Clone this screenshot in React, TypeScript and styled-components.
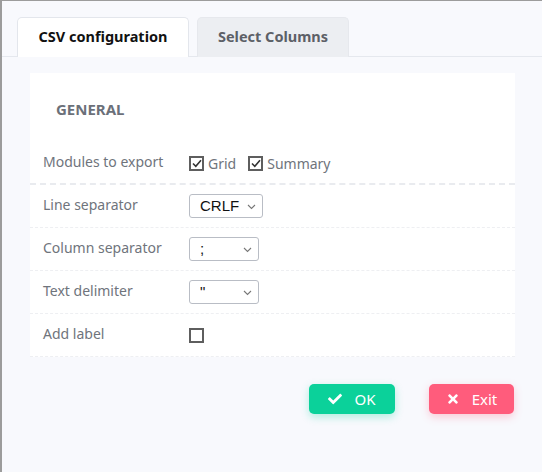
import React from "react";
import styled, { createGlobalStyle } from "styled-components";
import { FaCheck, FaTimes } from "react-icons/fa";

const GlobalStyle = createGlobalStyle`
  html, body {
    margin: 0;
    padding: 0;
    background: #f8f9fd;
    font-family: "Noto Sans", "Open Sans", sans-serif;
  }
  * { box-sizing: border-box; }
`;

const Frame = styled.div`
  height: 472px;
  border-top: 1px solid #9c9c9c;
  border-left: 2px solid #9c9c9c;
  background: #f8f9fd;
`;

const TabBar = styled.div`
  display: flex;
  gap: 8px;
  padding: 16px 0 0 15px;
  border-bottom: 1px solid #e5e8ee;
`;

const Tab = styled.div<{ $active?: boolean }>`
  height: 40px;
  display: flex;
  align-items: center;
  justify-content: center;
  padding-bottom: 4px;
  width: ${(p) => (p.$active ? "172px" : "152px")};
  margin-bottom: -1px;
  border: 1px solid ${(p) => (p.$active ? "#e3e6ec" : "#e6e8ed")};
  border-bottom: none;
  border-radius: 5px 5px 0 0;
  background: ${(p) => (p.$active ? "#ffffff" : "#eceef2")};
  color: ${(p) => (p.$active ? "#111" : "#5c6067")};
  font-weight: 700;
  font-size: 14.5px;
`;

const Panel = styled.div`
  margin: 16px 27px 0 28px;
  background: #fff;
`;

const Heading = styled.div`
  padding: 26px 26px 0;
  height: 66px;
  font-size: 15px;
  font-weight: 700;
  color: #6b7079;
  line-height: 20px;
`;

const Row = styled.div<{ $h: number; $strong?: boolean }>`
  display: grid;
  grid-template-columns: 146px 1fr;
  align-items: center;
  height: ${(p) => p.$h}px;
  padding: ${(p) => (p.$strong ? "4px" : "0")} 13px 0;
  border-bottom: ${(p) => (p.$strong ? "2px dashed #e9ebef" : "1px dashed #eeeff2")};
`;

const Label = styled.div`
  font-size: 14px;
  color: #6f747c;
  padding-bottom: 4px;
`;

const Options = styled.div`
  display: flex;
  align-items: center;
  gap: 12px;
`;

const Option = styled.label`
  display: flex;
  align-items: center;
  gap: 4px;
  font-size: 14px;
  color: #6f747c;
`;

const Box = styled.span`
  width: 15px;
  height: 15px;
  border: 2px solid #5e5e5e;
  background: #fff;
  display: inline-flex;
  align-items: center;
  justify-content: center;
`;

const SelectWrap = styled.div<{ $w: number }>`
  position: relative;
  width: ${(p) => p.$w}px;
  height: 24px;
  border: 1px solid #b9bdc5;
  border-radius: 3px;
  background: #fff;
`;

const SelectText = styled.div`
  padding: 1px 0 0 10px;
  font-family: "Liberation Sans", Arial, sans-serif;
  font-size: 15px;
  line-height: 20px;
  color: #111;
`;

const Chevron = styled.svg`
  position: absolute;
  right: 6px;
  top: 9px;
`;

const Footer = styled.div`
  display: flex;
  justify-content: flex-end;
  gap: 34px;
  margin: 27px 28px 0 0;
`;

const Button = styled.button<{ $color: string; $glow: string; $w: number }>`
  height: 30px;
  width: ${(p) => p.$w}px;
  border: none;
  border-radius: 5px;
  background: ${(p) => p.$color};
  color: #fff;
  font-family: "Noto Sans", sans-serif;
  font-size: 15px;
  display: flex;
  align-items: center;
  justify-content: center;
  gap: 12px;
  box-shadow: 0 3px 8px ${(p) => p.$glow};
`;

const Check = () => (
  <svg width="10" height="9" viewBox="0 0 10 9">
    <path d="M1 4.5 L3.8 7.3 L9 1.2" fill="none" stroke="#333" strokeWidth="1.6" />
  </svg>
);

const Select = ({ value, w }: { value: string; w: number }) => (
  <SelectWrap $w={w}>
    <SelectText>{value}</SelectText>
    <Chevron width="9" height="6" viewBox="0 0 9 6">
      <path d="M1 1 L4.5 4.5 L8 1" fill="none" stroke="#777" strokeWidth="1.1" />
    </Chevron>
  </SelectWrap>
);

export default function App() {
  return (
    <>
      <GlobalStyle />
      <Frame>
        <TabBar>
          <Tab $active>CSV configuration</Tab>
          <Tab>Select Columns</Tab>
        </TabBar>
        <Panel>
          <Heading>GENERAL</Heading>
          <Row $h={46} $strong>
            <Label>Modules to export</Label>
            <Options>
              <Option>
                <Box><Check /></Box>Grid
              </Option>
              <Option>
                <Box><Check /></Box>Summary
              </Option>
            </Options>
          </Row>
          <Row $h={43}>
            <Label>Line separator</Label>
            <Select value="CRLF" w={74} />
          </Row>
          <Row $h={43}>
            <Label>Column separator</Label>
            <Select value=";" w={70} />
          </Row>
          <Row $h={43}>
            <Label>Text delimiter</Label>
            <Select value={'"'} w={70} />
          </Row>
          <Row $h={43}>
            <Label>Add label</Label>
            <Box />
          </Row>
        </Panel>
        <Footer>
          <Button $w={86} $color="#0bd19a" $glow="rgba(11,209,154,0.3)">
            <FaCheck size={14} /> OK
          </Button>
          <Button $w={85} $color="#ff5c7c" $glow="rgba(255,92,124,0.3)">
            <FaTimes size={14} /> Exit
          </Button>
        </Footer>
      </Frame>
    </>
  );
}
